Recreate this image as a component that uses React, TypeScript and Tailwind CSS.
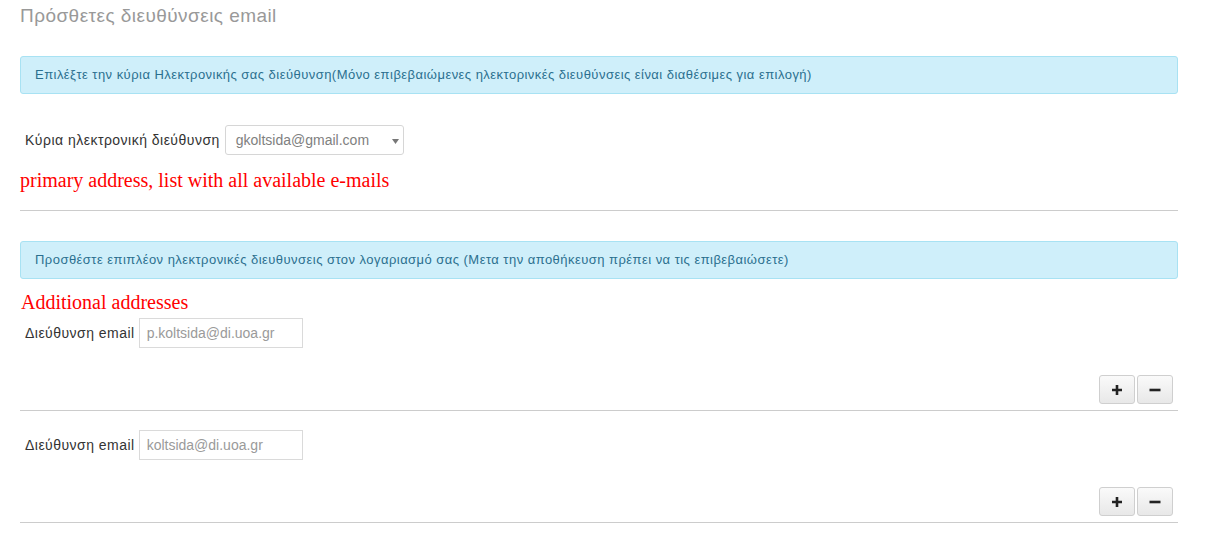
import React from "react";

// ---------------------------------------------------------------------------
// Constants
// ---------------------------------------------------------------------------

const FONT = "font-['Liberation_Sans',Arial,sans-serif]";

const ALERT =
  "h-[38px] w-full rounded-[3px] border border-[#a8e2f3] bg-[#cfeffa] pl-[14px] flex items-center text-[13px] tracking-[0.46px] text-[#2b6f8f]";

const NOTE = "font-['Liberation_Serif','Times_New_Roman',serif] text-[20px] leading-[24px] text-[#ff0000]";

const EMAILS = ["p.koltsida@di.uoa.gr", "koltsida@di.uoa.gr"];

// ---------------------------------------------------------------------------
// Pieces
// ---------------------------------------------------------------------------

function PlusMinus() {
  const btn =
    "flex h-[29px] w-[36px] items-center justify-center rounded-[3px] border border-[#cfcfcf] bg-gradient-to-b from-[#fafafa] to-[#e8e8e8] text-[#222]";
  return (
    <div className="flex justify-end gap-[2px] pr-[5px]">
      <button type="button" className={btn} aria-label="add">
        <svg width="12" height="12" viewBox="0 0 12 12">
          <path d="M6 1v10M1 6h10" stroke="#222" strokeWidth="2.6" />
        </svg>
      </button>
      <button type="button" className={btn} aria-label="remove">
        <svg width="12" height="12" viewBox="0 0 12 12">
          <path d="M0.5 6h11" stroke="#222" strokeWidth="2.6" />
        </svg>
      </button>
    </div>
  );
}

function EmailRow({ value }: { value: string }) {
  return (
    <div className="flex items-center pl-[5px]">
      <span className="mr-[4px] text-[14px] tracking-[0.47px] text-[#333]">
        Διεύθυνση email
      </span>
      <input
        type="text"
        readOnly
        value={value}
        className="h-[30px] w-[164px] border border-[#dadada] bg-white pl-[7px] text-[14px] text-[#9a9a9a] outline-none"
      />
    </div>
  );
}

// ---------------------------------------------------------------------------
// Component
// ---------------------------------------------------------------------------

export default function App() {
  return (
    <div className={`${FONT} min-h-[535px] bg-white`}>
      <div className="ml-[20px] w-[1158px] pt-[5px]">
        <h2 className="text-[19px] leading-[22px] tracking-[0.45px] text-[#999]">
          Πρόσθετες διευθύνσεις email
        </h2>

        <div className={`${ALERT} mt-[29px]`}>
          Επιλέξτε την κύρια Ηλεκτρονικής σας διεύθυνση(Μόνο επιβεβαιώμενες
          ηλεκτορινκές διευθύνσεις είναι διαθέσιμες για επιλογή)
        </div>

        {/* Primary address */}
        <div className="mt-[31px] flex items-center pl-[5px]">
          <span className="mr-[5px] text-[14px] tracking-[0.48px] text-[#333]">
            Κύρια ηλεκτρονική διεύθυνση
          </span>
          <div className="relative flex h-[30px] w-[179px] items-center rounded-[3px] border border-[#d6d6d6] bg-white pl-[10px] text-[14px] text-[#808080]">
            gkoltsida@gmail.com
            <svg
              className="absolute right-[4px] top-[13px]"
              width="7"
              height="5"
              viewBox="0 0 7 5"
            >
              <path d="M0 0h7L3.5 5z" fill="#777" />
            </svg>
          </div>
        </div>

        <p className={`${NOTE} mt-[13px]`}>
          primary address, list with all available e-mails
        </p>

        <hr className="mt-[18px] border-t border-[#cccccc]" />

        <div className={`${ALERT} mt-[30px]`}>
          Προσθέστε επιπλέον ηλεκτρονικές διευθυνσεις στον λογαριασμό σας (Μετα
          την αποθήκευση πρέπει να τις επιβεβαιώσετε)
        </div>

        <p className={`${NOTE} mt-[11px] pl-[1px]`}>Additional addresses</p>

        <div className="mt-[4px]">
          <EmailRow value={EMAILS[0]} />
        </div>
        <div className="mt-[27px]">
          <PlusMinus />
        </div>
        <hr className="mt-[6px] border-t border-[#cccccc]" />

        <div className="mt-[19px]">
          <EmailRow value={EMAILS[1]} />
        </div>
        <div className="mt-[27px]">
          <PlusMinus />
        </div>
        <hr className="mt-[6px] border-t border-[#cccccc]" />
      </div>
    </div>
  );
}
